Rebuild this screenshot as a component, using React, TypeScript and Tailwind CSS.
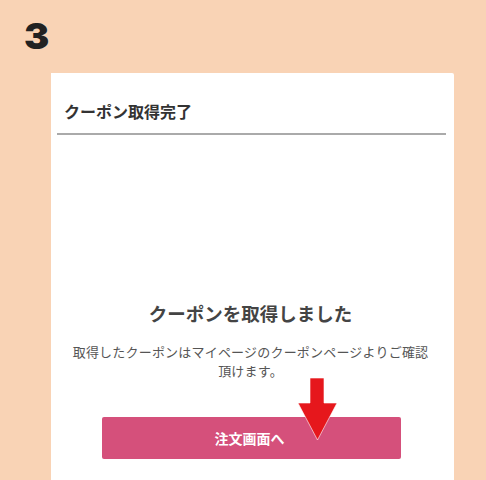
import React from "react";

export default function App() {
  return (
    <div
      className="relative h-[480px] w-[486px] overflow-hidden bg-[#f9d3b5]"
      style={{ fontFamily: '"Noto Sans CJK JP", "Noto Sans", sans-serif' }}
    >
      <div className="pl-[24px] pt-[18px] h-[73px]">
        <span
          className="block text-[36px] leading-[36px] font-black text-[#222] scale-x-105 origin-left"
          style={{ fontFamily: 'Inter, "Noto Sans", sans-serif' }}
        >
          3
        </span>
      </div>
      <div className="ml-[51px] w-[403px] h-[420px] bg-white rounded-tr-[2px]">
        <div className="pt-[26px] px-[6px] mr-[2px]">
          <div className="border-b-2 border-[#aaaaaa] pb-[10px]">
            <h2 className="pl-[7px] text-[16px] leading-[24px] font-bold text-[#333]">
              クーポン取得完了
            </h2>
          </div>
        </div>
        <div className="mt-[165px] text-center pr-[4px]">
          <h3 className="text-[18.5px] leading-[26px] font-bold text-[#444]">
            クーポンを取得しました
          </h3>
          <p className="mt-[16px] text-[13px] leading-[19px] text-[#555] tracking-[0.2px]">
            取得したクーポンはマイページのクーポンページよりご確認
            <br />
            頂けます。
          </p>
        </div>
        <div className="mt-[37px] ml-[51px] w-[299px]">
          <button className="w-full h-[42px] rounded-[2px] bg-[#d5507b] text-white text-[14px] font-bold pr-[4px]">
            注文画面へ
          </button>
        </div>
      </div>
      <svg
        className="absolute left-0 top-0"
        width="486"
        height="480"
        viewBox="0 0 486 480"
      >
        <polygon
          points="310,378 324,378 324,403 337,403 317.5,440 298,403 310,403"
          fill="#e6171c"
          stroke="#ffffff"
          strokeWidth="0.6"
        />
      </svg>
    </div>
  );
}
